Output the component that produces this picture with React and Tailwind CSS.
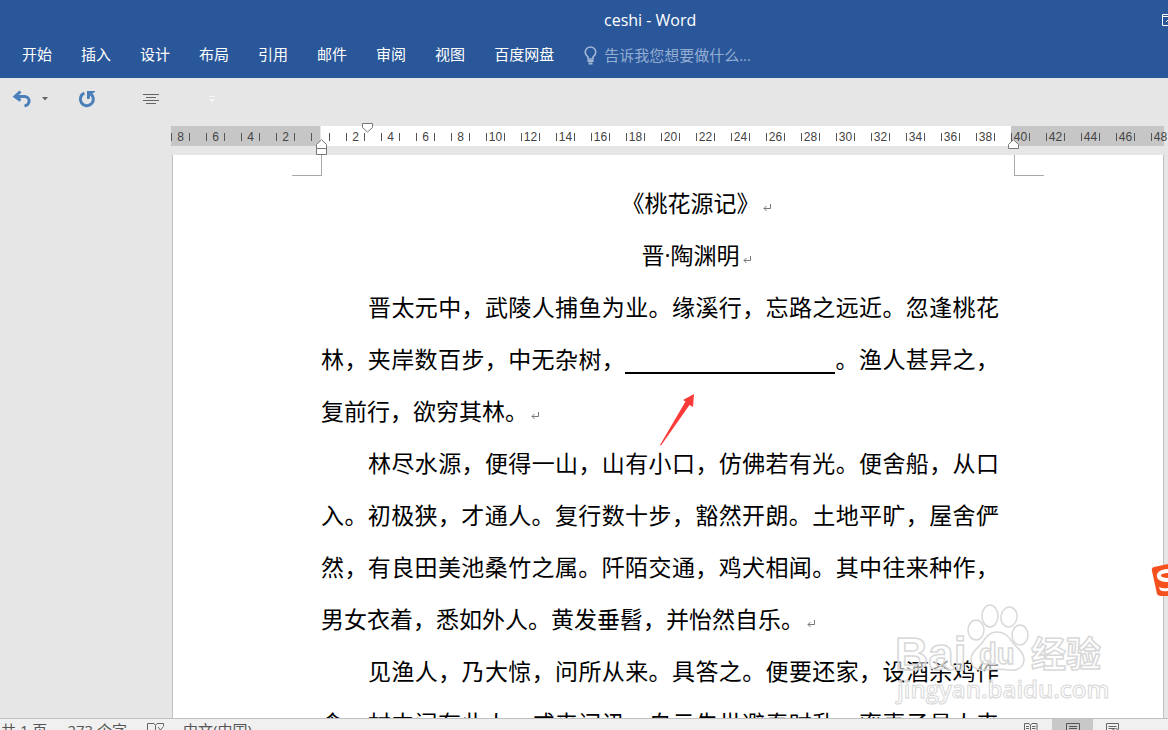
const tabs = ["开始", "插入", "设计", "布局", "引用", "邮件", "审阅", "视图", "百度网盘"];

const leftUnits = [8, 6, 4, 2];
const textUnits = Array.from({ length: 19 }, (_, i) => (i + 1) * 2);
const rightUnits = [40, 42, 44, 46, 48];

function RulerUnit({ value }) {
    return (
        <span className="w-[35px] shrink-0">
            <span className="flex h-2 w-[19px] items-center justify-center border-x border-[#555]">{value}</span>
        </span>
    );
}

function ParagraphMark() {
    return (
        <svg className="ml-[3px] inline-block h-2 w-2 align-baseline" viewBox="0 0 8 8" fill="none" stroke="#777" aria-hidden="true">
            <path d="M7.5 0v4.5H1M3.5 2L1 4.5L3.5 7" />
        </svg>
    );
}

function TitleBar() {
    return (
        <header className="shrink-0 overflow-hidden bg-[#2a579a] text-white">
            <div className="flex h-10 items-center justify-between">
                <h1 className="pl-[604px] text-[16px]">ceshi - Word</h1>
                <button type="button" aria-label="功能区显示选项" className="-mr-2 shrink-0">
                    <svg width="14" height="12" viewBox="0 0 14 12" fill="none" stroke="white">
                        <path d="M0.5 0.5h13v11H0.5zM0.5 2.5h13M4 8l3-3l3 3M7 5v5" />
                    </svg>
                </button>
            </div>
            <div className="flex h-[38px] items-start pl-[22px]">
                <nav className="flex gap-[29px] text-[15px] leading-7">
                    {tabs.map((tab) => (
                        <button key={tab} type="button" className="shrink-0">{tab}</button>
                    ))}
                </nav>
                <label className="ml-[30px] flex h-[30px] items-center gap-[7px]">
                    <svg width="13" height="19" viewBox="0 0 13 19" fill="none" stroke="#a3b7d6" strokeWidth="2" aria-hidden="true">
                        <path d="M4 13v-2C2.500 9.500 1.200 8.500 1.200 6.200a5.300 5.200 0 0 1 10.600 0C11.800 8.500 10.500 9.500 9 11v2z" strokeWidth="1.600" />
                        <path d="M3.500 15h6M4.500 17.500h4" />
                    </svg>
                    <input
                        type="text"
                        aria-label="告诉我您想要做什么"
                        placeholder="告诉我您想要做什么..."
                        className="w-44 bg-transparent text-[15px] outline-none placeholder:text-[#94add2]"
                    />
                </label>
            </div>
        </header>
    );
}

function QuickToolbar() {
    return (
        <div className="flex h-[42px] shrink-0 items-center pl-3">
            <button type="button" aria-label="撤消">
                <svg width="20" height="18" viewBox="0 0 20 18" fill="none" stroke="#4a7fba" strokeWidth="3">
                    <path d="M3 6.500h9.500a4.600 4.600 0 0 1 0 9.200" />
                    <path d="M8.500 1.500L3 6.500l5.500 4" />
                </svg>
            </button>
            <button type="button" aria-label="撤消列表" className="ml-[10px]">
                <svg width="6" height="4" viewBox="0 0 6 4" fill="#666"><path d="M0 0h6L3 3.500z" /></svg>
            </button>
            <button type="button" aria-label="恢复" className="ml-[30px]">
                <svg width="18" height="18" viewBox="0 0 18 18" fill="none" stroke="#4a7fba" strokeWidth="3">
                    <path d="M6.300 3.200A6.500 6.500 0 1 0 12.500 3.800" />
                    <path d="M9 1h8.500l-2.500 2.500l-2-0.500l-1.500 6H9z" fill="#4a7fba" stroke="none" />
                </svg>
            </button>
            <button type="button" aria-label="居中" className="ml-[47px]">
                <svg width="16" height="10" viewBox="0 0 16 10" stroke="#666">
                    <path d="M0 0.500h16M3 3.500h10M0 6.500h16M3 9.500h10" />
                </svg>
            </button>
            <button type="button" aria-label="自定义快速访问工具栏" className="ml-[50px]">
                <svg width="6" height="7" viewBox="0 0 6 7" fill="#f6f6f6"><path d="M0 0h6v1H0zM0 3h6L3 6.500z" /></svg>
            </button>
        </div>
    );
}

function Ruler() {
    return (
        <div className="relative mt-[6px] flex h-5 shrink-0 font-['Liberation_Sans',sans-serif] text-[12px] leading-none text-[#444]">
            <div className="mr-px flex w-[149px] shrink-0 items-center bg-[#c6c6c6] pt-[2px]">
                {leftUnits.map((n) => <RulerUnit key={n} value={n} />)}
                <span className="h-2 border-l border-[#555]" />
            </div>
            <div className="flex shrink-0 items-center bg-white pl-2 pt-[2px]">
                <span className="h-2 w-[17px] border-l border-[#555]" />
                {textUnits.map((n) => <RulerUnit key={n} value={n} />)}
            </div>
            <div className="flex min-w-0 flex-1 items-center bg-[#c6c6c6] pt-[2px]">
                {rightUnits.map((n) => <RulerUnit key={n} value={n} />)}
            </div>
            <svg className="absolute -top-[3px] left-[191px]" width="11" height="10" viewBox="0 0 11 10" fill="white" stroke="#777">
                <path d="M0.500 0.500h10v4L5.500 9L0.500 4.500z" />
            </svg>
            <svg className="absolute left-[145px] top-[13px]" width="11" height="16" viewBox="0 0 11 16" fill="white" stroke="#777">
                <path d="M5.500 0.700L10.500 5.500v10H0.500v-10zM0.500 9.500h10" />
            </svg>
            <svg className="absolute left-[837px] top-[13px]" width="11" height="10" viewBox="0 0 11 10" fill="white" stroke="#777">
                <path d="M5.500 0.700L10.500 5.500v4H0.500v-4z" />
            </svg>
        </div>
    );
}

function Watermark() {
    return (
        <svg
            className="absolute left-[717px] top-[445px]"
            width="225"
            height="110"
            viewBox="0 0 225 110"
            fill="white"
            fillOpacity="0.6"
            stroke="#d8d8d8"
            fontFamily="'Liberation Sans', 'Noto Sans CJK SC', sans-serif"
            fontWeight="bold"
        >
            <g strokeWidth="1.500">
                <text x="5" y="70" fontSize="46">Bai</text>
                <ellipse cx="100" cy="16" rx="8" ry="11" />
                <ellipse cx="119" cy="17" rx="8" ry="10" transform="rotate(10 119 17)" />
                <ellipse cx="86" cy="30" rx="8" ry="10" />
                <ellipse cx="130" cy="35" rx="8" ry="10" />
                <path d="M107 32c-8 0-12 6-15 11c-4 5-11 9-11 16c0 8 6 12 13 11c9-1 18-1 27 0c8 1 13-4 13-11c0-7-7-11-11-16c-4-6-8-11-16-11z" />
                <text x="89" y="64" fontSize="29">du</text>
                <text x="141" y="67" fontSize="35">经验</text>
            </g>
            <text x="7" y="98" fontSize="24" fontWeight="600" fontFamily="'Open Sans', sans-serif">jingyan.baidu.com</text>
        </svg>
    );
}

function Page() {
    return (
        <main className="relative ml-px mt-[9px] min-h-0 flex-1 overflow-hidden border-x border-[#c0c0c0] bg-white">
            <div className="flex h-[21px] justify-between px-[119px]">
                <span className="w-[30px] border-b border-r border-[#aaa]" />
                <span className="w-[30px] border-b border-l border-[#aaa]" />
            </div>
            <article className="ml-[148px] max-w-[678px] pt-px text-justify text-[23px] leading-[52px] text-black">
                <h2 className="pl-[72px] text-center">《桃花源记》<ParagraphMark /></h2>
                <p className="pl-[72px] text-center">晋·陶渊明<ParagraphMark /></p>
                <p className="indent-[47px]">
                    晋太元中，武陵人捕鱼为业。缘溪行，忘路之远近。忽逢桃花林，夹岸数百步，中无杂树，<span className="inline-block h-5 w-[210px] border-b-2 border-black align-[-6px] indent-0" />。渔人甚异之，复前行，欲穷其林。<ParagraphMark />
                </p>
                <p className="indent-[47px]">
                    林尽水源，便得一山，山有小口，仿佛若有光。便舍船，从口入。初极狭，才通人。复行数十步，豁然开朗。土地平旷，屋舍俨然，有良田美池桑竹之属。阡陌交通，鸡犬相闻。其中往来种作，男女衣着，悉如外人。黄发垂髫，并怡然自乐。<ParagraphMark />
                </p>
                <p className="indent-[47px]">
                    见渔人，乃大惊，问所从来。具答之。便要还家，设酒杀鸡作食。村中闻有此人，咸来问讯。自云先世避秦时乱，率妻子邑人来此绝境，不复出焉，遂与外人间隔。
                </p>
            </article>
            <svg className="absolute left-[487px] top-[239px]" width="36" height="54" viewBox="0 0 36 54" fill="#fb3b39">
                <path d="M34 0L33 13L29.500 11L1 51.500L0 51L25.500 7.500L23 6z" />
            </svg>
            <Watermark />
        </main>
    );
}

function StatusBar() {
    return (
        <footer className="h-3 shrink-0 overflow-hidden border-t border-[#c0c0c0] bg-[#f0f0f0] text-[15px] text-[#555]">
            <div className="flex h-[22px] items-center pl-px">
                <span>共 1 页</span>
                <span className="ml-5">273 个字</span>
                <button type="button" aria-label="校对" className="ml-5">
                    <svg width="18" height="14" viewBox="0 0 18 14" fill="none" stroke="#666">
                        <path d="M8.500 2.500L7 0.500H0.500v11H7l1.500 2V2.500L10 0.500h6.500v3M11 4l5 6M16 4l-5 6" />
                    </svg>
                </button>
                <button type="button" className="ml-[18px]">中文(中国)</button>
                <div className="ml-auto mr-[37px] flex h-full shrink-0">
                    <button type="button" aria-label="阅读视图" className="flex w-[42px] items-center justify-center">
                        <svg width="14" height="14" viewBox="0 0 14 14" fill="none" stroke="#666">
                            <path d="M6.500 2.500L5 0.500H0.500v11H5l1.500 2l1.500-2h5v-11H8zM2 3.500h3M2 5.500h3M8 3.500h3.500M8 5.500h3.500M6.500 2.500v11" />
                        </svg>
                    </button>
                    <button type="button" aria-label="页面视图" className="flex w-[41px] items-center justify-center bg-[#c8c8c8]">
                        <svg width="14" height="14" viewBox="0 0 14 14" fill="none" stroke="#555">
                            <path d="M0.500 0.500h13v13H0.500zM3 3.500h8M3 5.500h8M3 7.500h8" />
                        </svg>
                    </button>
                    <button type="button" aria-label="Web 版式视图" className="flex w-[38px] items-center justify-center">
                        <svg width="13" height="14" viewBox="0 0 13 14" fill="none" stroke="#666">
                            <path d="M12.500 6V0.500H0.500v13H6M2.500 3.500h8M2.500 5.500h6" />
                            <circle cx="9.500" cy="9" r="3.500" />
                        </svg>
                    </button>
                </div>
            </div>
        </footer>
    );
}

export default function App() {
    return (
        <div className="relative flex h-screen flex-col overflow-hidden bg-[#e6e6e6] font-['Open_Sans','Noto_Sans_CJK_SC',sans-serif]">
            <TitleBar />
            <QuickToolbar />
            <div className="flex min-h-0 flex-1 flex-col pl-[171px] pr-1">
                <Ruler />
                <Page />
            </div>
            <StatusBar />
            {/* input method badge docked at the screen edge */}
            <svg className="absolute right-0 top-[564px]" width="17" height="33" viewBox="0 0 17 33">
                <path d="M17 0L3 3Q0 4 1 7L6 30Q7 32 10 32H17z" fill="#f4511e" />
                <path d="M17 5C9 5 5 9 6 13C7 17 12 18 17 18V14C13 14 10 13 10 11.500S13 9 17 9z" fill="white" />
                <path d="M8 23Q12 25 17 24V27Q12 28 9 26z" fill="white" />
            </svg>
        </div>
    );
}
